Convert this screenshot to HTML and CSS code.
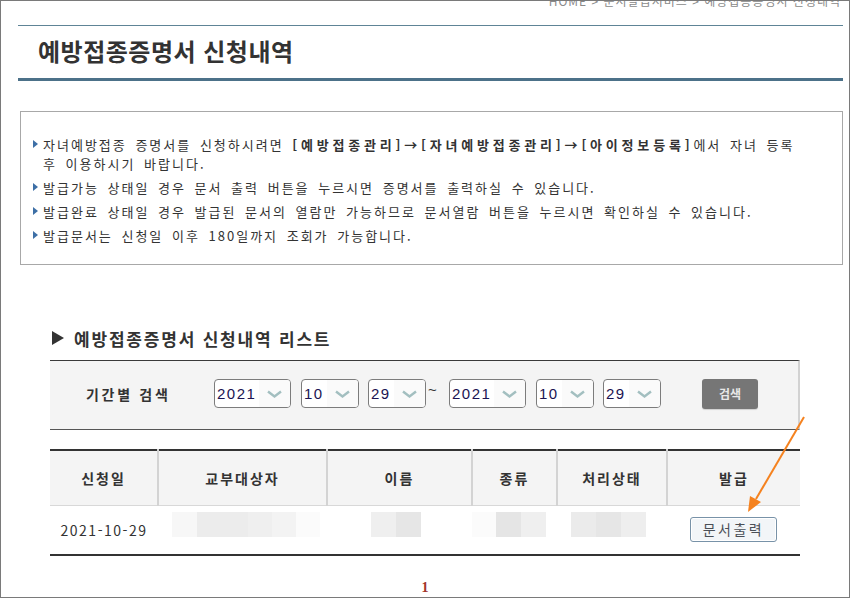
FILE: index.html
```html
<!DOCTYPE html>
<html lang="ko">
<head>
    <meta charset="UTF-8">
    <title>예방접종증명서 신청내역</title>
    <link rel="stylesheet" href="styles.css">
</head>
<body>
    <div class="frame">
        <div class="breadcrumb">HOME &gt; 문서발급서비스 &gt; 예방접종증명서 신청내역</div>

        <h1 class="page-title">예방접종증명서 신청내역</h1>

        <!-- 안내 -->
        <ul class="info-box">
            <li><span class="bullet"></span><span>자녀예방접종 증명서를 신청하시려면 <b>[예방접종관리]→[자녀예방접종관리]→[아이정보등록]</b>에서 자녀 등록<br>후 이용하시기 바랍니다.</span></li>
            <li><span class="bullet"></span><span>발급가능 상태일 경우 문서 출력 버튼을 누르시면 증명서를 출력하실 수 있습니다.</span></li>
            <li><span class="bullet"></span><span>발급완료 상태일 경우 발급된 문서의 열람만 가능하므로 문서열람 버튼을 누르시면 확인하실 수 있습니다.</span></li>
            <li><span class="bullet"></span><span>발급문서는 신청일 이후 180일까지 조회가 가능합니다.</span></li>
        </ul>

        <h2 class="section-title"><span class="tri"></span>예방접종증명서 신청내역 리스트</h2>

        <!-- 기간 검색 -->
        <div class="search-box">
            <div class="search-label">기간별 검색</div>
            <div class="sel sel-year"><span class="sel-val">2021</span><span class="sel-arrow"><svg width="15" height="8" viewBox="0 0 15 8"><path d="M1 1.5 L7.5 6.5 L14 1.5" fill="none" stroke="#a3bfc0" stroke-width="2.4"/></svg></span></div>
            <div class="sel"><span class="sel-val">10</span><span class="sel-arrow"><svg width="15" height="8" viewBox="0 0 15 8"><path d="M1 1.5 L7.5 6.5 L14 1.5" fill="none" stroke="#a3bfc0" stroke-width="2.4"/></svg></span></div>
            <div class="sel"><span class="sel-val">29</span><span class="sel-arrow"><svg width="15" height="8" viewBox="0 0 15 8"><path d="M1 1.5 L7.5 6.5 L14 1.5" fill="none" stroke="#a3bfc0" stroke-width="2.4"/></svg></span></div>
            <div class="tilde">~</div>
            <div class="sel sel-year"><span class="sel-val">2021</span><span class="sel-arrow"><svg width="15" height="8" viewBox="0 0 15 8"><path d="M1 1.5 L7.5 6.5 L14 1.5" fill="none" stroke="#a3bfc0" stroke-width="2.4"/></svg></span></div>
            <div class="sel"><span class="sel-val">10</span><span class="sel-arrow"><svg width="15" height="8" viewBox="0 0 15 8"><path d="M1 1.5 L7.5 6.5 L14 1.5" fill="none" stroke="#a3bfc0" stroke-width="2.4"/></svg></span></div>
            <div class="sel"><span class="sel-val">29</span><span class="sel-arrow"><svg width="15" height="8" viewBox="0 0 15 8"><path d="M1 1.5 L7.5 6.5 L14 1.5" fill="none" stroke="#a3bfc0" stroke-width="2.4"/></svg></span></div>
            <button class="search-button">검색</button>
        </div>

        <!-- 신청내역 리스트 -->
        <table class="list-table">
            <colgroup>
                <col class="col-date">
                <col class="col-target">
                <col class="col-name">
                <col class="col-kind">
                <col class="col-state">
                <col class="col-issue">
            </colgroup>
            <thead>
                <tr>
                    <th>신청일</th>
                    <th>교부대상자</th>
                    <th>이름</th>
                    <th>종류</th>
                    <th>처리상태</th>
                    <th>발급</th>
                </tr>
            </thead>
            <tbody>
                <tr>
                    <td class="date">2021-10-29</td>
                    <td><span class="masked masked-target"></span></td>
                    <td><span class="masked masked-name"></span></td>
                    <td><span class="masked masked-kind"></span></td>
                    <td><span class="masked masked-state"></span></td>
                    <td><button class="print-button">문서출력</button></td>
                </tr>
            </tbody>
        </table>

        <div class="paging"><a href="#">1</a></div>

        <!-- 안내 화살표 -->
        <svg class="pointer-arrow" width="851" height="598" viewBox="0 0 851 598">
            <line x1="804" y1="417" x2="756" y2="499" stroke="#f5821f" stroke-width="2"/>
            <polygon points="748,512 761,502 750,496" fill="#f5821f"/>
        </svg>
    </div>
</body>
</html>
```

FILE: styles.css
```css
body {
    margin: 0;
    padding: 0;
    background: #fff;
    font-family: "Noto Sans CJK KR", "Noto Sans", sans-serif;
    color: #333;
}
.frame {
    position: relative;
    width: 850px;
    height: 598px;
    box-sizing: border-box;
    border: 1px solid #7a7a7a;
    overflow: hidden;
}
.breadcrumb {
    height: 30px;
    margin-top: -6px;
    padding-right: 8px;
    text-align: right;
    font-size: 12px;
    line-height: 12px;
    letter-spacing: 1px;
    color: #8a8a8a;
    box-sizing: border-box;
}
.page-title {
    margin: 0 6px 0 17px;
    padding-left: 20px;
    height: 52px;
    line-height: 50px;
    border-top: 1px solid #5e8496;
    border-bottom: 3px solid #4c7189;
    font-size: 24px;
    font-weight: bold;
    color: #333;
    letter-spacing: 0.5px;
}
.info-box {
    list-style: none;
    margin: 30px 0 0 19px;
    padding: 23px 12px 19px 12px;
    width: 823px;
    box-sizing: border-box;
    border: 1px solid #a8a8a8;
    font-size: 13px;
    line-height: 19px;
    letter-spacing: 2px;
    word-spacing: 3px;
    color: #333;
}
.info-box li {
    display: flex;
    margin-bottom: 5px;
}
.info-box li:last-child {
    margin-bottom: 0;
}
.info-box b {
    color: #333;
    letter-spacing: 3.8px;
}
.bullet {
    flex: none;
    width: 0;
    height: 0;
    margin: 5px 5px 0 0;
    border-left: 5px solid #3d6fa6;
    border-top: 4px solid transparent;
    border-bottom: 4px solid transparent;
}
.section-title {
    display: flex;
    align-items: center;
    margin: 61px 0 0 51px;
    height: 24px;
    font-size: 17px;
    font-weight: bold;
    letter-spacing: 1.8px;
    color: #333;
}
.tri {
    width: 0;
    height: 0;
    margin-right: 10px;
    border-left: 12px solid #333;
    border-top: 7px solid transparent;
    border-bottom: 7px solid transparent;
}
.search-box {
    display: flex;
    align-items: center;
    margin: 10px 0 0 49px;
    width: 750px;
    height: 70px;
    box-sizing: border-box;
    padding: 0 0 3px 36px;
    background: #f4f4f4;
    border-top: 1px solid #3a3a3a;
    border-bottom: 1px solid #555;
    border-right: 2px solid #d2d2d2;
}
.search-label {
    width: 128px;
    flex: none;
    font-size: 14px;
    font-weight: bold;
    letter-spacing: 2.7px;
    color: #333;
}
.sel {
    display: flex;
    align-items: center;
    width: 58px;
    height: 29px;
    margin-right: 9px;
    box-sizing: border-box;
    border: 1px solid #7c7c7c;
    border-radius: 4px;
    background: #fff;
    overflow: hidden;
    flex: none;
}
.sel-year {
    width: 77px;
    margin-right: 10px;
}
.sel-val {
    flex: 1;
    padding-left: 2px;
    font-family: "Liberation Sans", Arial, sans-serif;
    font-size: 15px;
    letter-spacing: 1.5px;
    color: #1b1452;
}
.sel-arrow {
    display: flex;
    align-items: center;
    justify-content: center;
    width: 31px;
    height: 100%;
    background: #fafafa;
}
.tilde {
    width: 21px;
    margin-left: -7px;
    align-self: flex-start;
    margin-top: 20px;
    font-family: "Liberation Sans", Arial, sans-serif;
    font-size: 15px;
    color: #333;
}
.search-button {
    margin-left: 32px;
    width: 56px;
    height: 30px;
    border: none;
    border-radius: 3px;
    background: #767676;
    color: #e8e8e8;
    font-family: "Noto Sans CJK KR", sans-serif;
    font-size: 12px;
    font-weight: bold;
    box-shadow: 0 1px 1px rgba(0, 0, 0, 0.15);
}
.list-table {
    margin: 19px 0 0 49px;
    width: 750px;
    border-collapse: collapse;
    table-layout: fixed;
    border-top: 2px solid #333;
    border-bottom: 2px solid #333;
}
.col-date { width: 108px; }
.col-target { width: 169px; }
.col-name { width: 145px; }
.col-kind { width: 85px; }
.col-state { width: 110px; }
.col-issue { width: 133px; }
.list-table th {
    height: 54px;
    padding: 0;
    background: #f4f4f4;
    border-left: 2px solid #d3d3d3;
    border-bottom: 1px solid #d8d8d8;
    font-size: 14px;
    font-weight: bold;
    letter-spacing: 2px;
    color: #333;
}
.list-table th:first-child {
    border-left: none;
}
.list-table td {
    height: 48px;
    padding: 0;
    text-align: center;
    vertical-align: middle;
}
.list-table td.date {
    font-size: 14px;
    letter-spacing: 1.5px;
    color: #333;
}
.masked {
    display: inline-block;
    height: 25px;
    margin-bottom: 12px;
    vertical-align: middle;
}
.masked-target {
    width: 148px;
    margin-left: 7px;
    background: linear-gradient(to right, #f7f7f7 0, #f7f7f7 25px, #ececec 25px, #ececec 76px, #efefef 76px, #efefef 100px, #f3f3f3 100px, #f3f3f3 124px, #fbfbfb 124px);
}
.masked-name {
    width: 50px;
    margin-right: 7px;
    background: linear-gradient(to right, #efefef 0, #efefef 25px, #e6e6e6 25px);
}
.masked-kind {
    width: 74px;
    margin-right: 11px;
    background: linear-gradient(to right, #fbfbfb 0, #fbfbfb 24px, #e5e5e5 24px, #e5e5e5 49px, #efefef 49px);
}
.masked-state {
    width: 75px;
    margin-right: 7px;
    background: linear-gradient(to right, #ebebeb 0, #ebebeb 25px, #e6e6e6 25px, #e6e6e6 50px, #eeeeee 50px);
}
.print-button {
    width: 87px;
    height: 25px;
    margin-bottom: 2px;
    padding: 0;
    border: 1px solid #7892a8;
    border-radius: 3px;
    background: #f2f5f8;
    font-family: "Noto Sans CJK KR", sans-serif;
    font-size: 14px;
    letter-spacing: 2.5px;
    color: #4a4f57;
    box-shadow: inset 0 0 0 1px #fff;
}
.paging {
    margin: 21px 0 0 49px;
    width: 750px;
    text-align: center;
    line-height: 16px;
}
.paging a {
    font-family: "Liberation Serif", serif;
    font-size: 14px;
    font-weight: bold;
    color: #a3352b;
    text-decoration: none;
}
.pointer-arrow {
    position: absolute;
    left: -1px;
    top: -1px;
    pointer-events: none;
}
```
